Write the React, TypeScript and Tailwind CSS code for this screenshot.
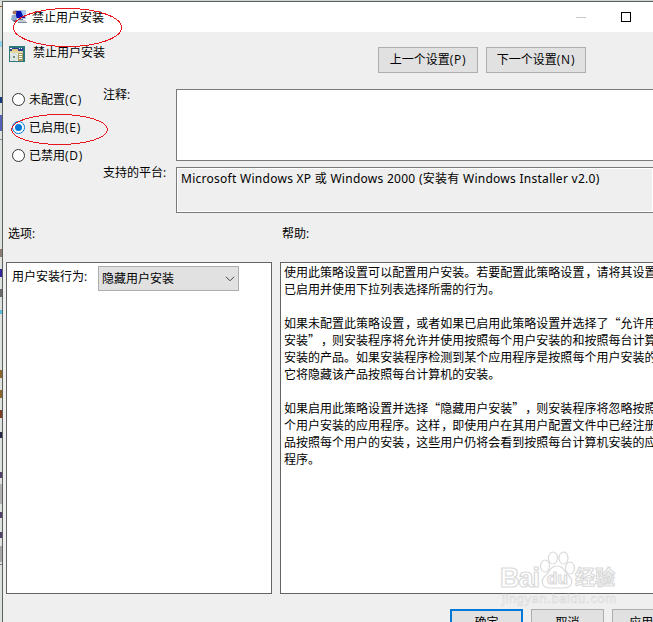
import React, { useState } from 'react';

const states = [
  { id: 'none', label: '未配置', hotkey: '(C)' },
  { id: 'on', label: '已启用', hotkey: '(E)' },
  { id: 'off', label: '已禁用', hotkey: '(D)' },
];

// Each entry is one visual line, empty strings are paragraph gaps
const helpLines = [
  '使用此策略设置可以配置用户安装。若要配置此策略设置，请将其设置为',
  '已启用并使用下拉列表选择所需的行为。',
  '',
  '如果未配置此策略设置，或者如果已启用此策略设置并选择了“允许用户',
  '安装”，则安装程序将允许并使用按照每个用户安装的和按照每台计算机',
  '安装的产品。如果安装程序检测到某个应用程序是按照每个用户安装的，',
  '它将隐藏该产品按照每台计算机的安装。',
  '',
  '如果启用此策略设置并选择“隐藏用户安装”，则安装程序将忽略按照每',
  '个用户安装的应用程序。这样，即使用户在其用户配置文件中已经注册产',
  '品按照每个用户的安装，这些用户仍将会看到按照每台计算机安装的应用',
  '程序。',
];

function PolicyIcon() {
  return (
    <svg width="16" height="16" viewBox="0 0 16 16" className="shrink-0">
      <path d="M4 1h11v9H4z" fill="#bac5da" />
      <path d="M5 2h9v7H5z" fill="#0712b5" />
      <path d="M10 2h4v6l-2-1z" fill="#9ac8fa" />
      <path d="M7 10h5v1H7z" fill="#69758e" />
      <path d="M6 11h8l2 3H7z" fill="#c3c9d2" />
      <path d="M7 13h9v1H7z" fill="#7d899d" />
      <circle cx="3.5" cy="3.5" r="2" fill="#a77b5f" />
      <path d="M1 6h4l1 5H0z" fill="#8fabcb" />
      <path d="M1 11h5v2H3z" fill="#5c6f8b" />
    </svg>
  );
}

function SettingIcon() {
  return (
    <svg width="16" height="16" viewBox="0 0 16 16" className="shrink-0">
      <path d="M0 0h16v16H0z" fill="#2b777c" />
      <path d="M1 2h13v3H1z" fill="#263f91" />
      <path d="M1 2h2v1H1zM10 2h1v1h-1zM12 2h1v1h-1z" fill="#fff" />
      <path d="M3 3h6v2H3z" fill="#e3c878" />
      <path d="M1 5h13v2H1z" fill="#e3d7a8" />
      <path d="M1 7h13v8H1z" fill="#f5f3e8" />
      <path d="M9 7h5v8H9z" fill="#a69b62" />
      <path d="M10 8h3v1h-3zM10 10h3v1h-3zM10 12h3v1h-3z" fill="#fff" />
      <circle cx="5" cy="11" r="3.5" fill="#e2e9e9" stroke="#b3c4c4" strokeWidth=".6" />
      <circle cx="5" cy="11" r="1" fill="#4f6d55" />
    </svg>
  );
}

function Watermark() {
  return (
    <svg
      width="130"
      height="66"
      viewBox="0 0 130 66"
      className="pointer-events-none absolute top-[546px] left-[495px]"
      fill="#fff"
      fillOpacity="0.65"
      stroke="#dadada"
      strokeWidth="1.2"
    >
      <text x="5" y="41" fontFamily="Liberation Sans" fontWeight="700" fontSize="27" textLength="40">
        Bai
      </text>
      <ellipse cx="50" cy="20" rx="4.5" ry="6" />
      <ellipse cx="58" cy="12" rx="4.5" ry="6" />
      <ellipse cx="68.5" cy="12" rx="4.5" ry="6" />
      <ellipse cx="75" cy="22" rx="4.5" ry="6" />
      <path d="M62 20c-7 0-7 6-12 10-5 5-3 12 5 12h14c8 0 10-7 5-12-5-4-5-10-12-10Z" />
      <text x="52" y="38" fontFamily="Liberation Sans" fontWeight="700" fontSize="17">
        du
      </text>
      <text x="80" y="39" fontFamily="Noto Sans CJK SC" fontWeight="700" fontSize="20">
        经验
      </text>
      <text x="7" y="57" fontFamily="Liberation Sans" fontSize="13" strokeWidth="0.6" textLength="114">
        jingyan.baidu.com
      </text>
    </svg>
  );
}

function HelpLine({ text }: { text: string }) {
  return (
    <p className="h-[17px]">
      {text.split('').map((ch, i) => (ch === '，' ? <span key={i} className="relative left-px">{ch}</span> : ch))}
    </p>
  );
}

function Hotkey({ text }: { text: string }) {
  return <span className="tracking-[0.8px]">{text}</span>;
}

export default function App() {
  const [selected, setSelected] = useState('on');

  return (
    <div className="relative flex h-[622px] w-[653px] overflow-hidden bg-[#cfd5d0] pt-px font-['Open_Sans','Noto_Sans_CJK_SC',sans-serif] text-[12px] leading-[17px] whitespace-nowrap text-black">
      {/* Sliver of the window behind */}
      <div className="flex w-0.5 shrink-0 flex-col bg-[#dfe1df]">
        <div className="mt-[5px] h-px bg-[#a35a20]" />
        <div className="mt-[34px] h-1.5 bg-[#8ed3ee]" />
        <div className="mt-[50px] h-1.5 bg-[#173b7c]" />
        <div className="mt-3 h-4 bg-[#5360b5]" />
        <div className="mt-2 h-px bg-[#8a8a8a]" />
        <div className="mt-[109px] h-2 bg-[#8f7c70]" />
        <div className="mt-3 h-2 bg-[#30269c]" />
        <div className="mt-3 h-2 bg-[#6a6a6a]" />
        <div className="mt-[13px] h-1 bg-[#57b9dc]" />
        <div className="mt-[56px] h-2 bg-[#8c642b]" />
        <div className="mt-3 h-2 bg-[#8c642b]" />
        <div className="mt-3 h-2 bg-[#7c3a20]" />
        <div className="mt-3.5 h-1.5 bg-[#272745]" />
        <div className="mt-[34px] h-1.5 bg-[#51406b]" />
        <div className="mt-1.5 h-5 bg-[#b0b0b0]" />
        <div className="mt-2 h-1.5 bg-[#51406b]" />
        <div className="mt-3.5 h-1.5 bg-[#51406b]" />
        <div className="mt-2 h-4 bg-[#a8a8a8]" />
        <div className="mt-0.5 h-px bg-[#777]" />
      </div>

      <div className="flex min-w-0 flex-1 flex-col border-t border-l border-[#5b625b] bg-[#efefef]">
        <div className="flex h-[30px] shrink-0 items-center bg-white pl-2">
          <PolicyIcon />
          <h1 className="ml-[5px]">禁止用户安装</h1>
          <div className="ml-auto h-px w-2.5 bg-[#c8c8c8]" />
          <div className="mr-[22px] ml-[35px] size-2.5 border border-black" />
        </div>

        <div className="flex h-[57px] shrink-0 items-start pt-[14px] pl-1.5">
          <SettingIcon />
          <h2 className="-mt-[2px] ml-2">禁止用户安装</h2>
          <div className="mt-px mr-[67px] ml-auto flex gap-2">
            <button className="h-[26px] w-[100px] border border-[#adadad] bg-[#e1e1e1] pb-0.5">
              上一个设置
              <Hotkey text="(P)" />
            </button>
            <button className="h-[26px] w-[100px] border border-[#adadad] bg-[#e1e1e1] pb-0.5">
              下一个设置
              <Hotkey text="(N)" />
            </button>
          </div>
        </div>

        <div className="flex h-[124px] shrink-0">
          <div className="flex w-[100px] flex-col gap-[11px] pt-0.5 pl-[9px]">
            {states.map((s) => (
              <label key={s.id} className="flex items-center">
                <input
                  type="radio"
                  name="state"
                  className="sr-only"
                  checked={selected === s.id}
                  onChange={() => setSelected(s.id)}
                />
                <span
                  className={
                    selected === s.id
                      ? 'mr-1 flex size-[13px] items-center justify-center rounded-full border border-[#0078d7] bg-white'
                      : 'mr-1 flex size-[13px] items-center justify-center rounded-full border border-[#333] bg-white'
                  }
                >
                  {selected === s.id && <span className="size-[7px] rounded-full bg-[#0078d7]" />}
                </span>
                {s.label}
                <Hotkey text={s.hotkey} />
              </label>
            ))}
          </div>
          <div className="flex w-[73px] flex-col justify-between pb-8">
            <span className="-mt-[3px]">注释:</span>
            <span>支持的平台:</span>
          </div>
          <div className="flex flex-1 flex-col gap-1.5">
            <div className="h-[72px] border border-r-0 border-[#7a7a7a] bg-white" />
            <div className="h-[46px] border border-r-0 border-[#7a7a7a] p-px">
              <div className="h-full bg-[#efefef] pt-px pl-[3px] font-['Noto_Sans','Noto_Sans_CJK_SC',sans-serif] tracking-[0.27px] outline outline-white">
                Microsoft Windows XP 或 Windows 2000 (安装有 Windows Installer v2.0)
              </div>
            </div>
          </div>
        </div>

        <div className="flex h-[49px] shrink-0 pt-3 pl-[5px]">
          <span className="w-[274px]">选项:</span>
          <span>帮助:</span>
        </div>

        <div className="flex h-[332px] shrink-0 gap-2 pl-[3px]">
          <div className="flex w-[266px] shrink-0 items-start border border-[#646464] bg-white pt-[3px] pl-[5px]">
            <span className="mt-0.5 w-[86px]">用户安装行为:</span>
            <button className="flex h-[25px] w-[141px] items-center justify-between border border-[#adadad] bg-[#e1e1e1] pr-[3px] pl-[3px]">
              隐藏用户安装
              <svg width="10" height="6" viewBox="0 0 10 6" fill="none" stroke="#444">
                <path d="M1 .8 5 4.8 9 .8" />
              </svg>
            </button>
          </div>
          <div className="min-w-0 flex-1 overflow-hidden border border-r-0 border-[#646464] bg-white pl-[3px] font-['Noto_Sans_CJK_SC',sans-serif] [text-spacing-trim:space-all]">
            {helpLines.map((line, i) => (
              <HelpLine key={i} text={line} />
            ))}
          </div>
        </div>

        <div className="flex shrink-0 gap-2 pt-[15px] pl-[447px]">
          <button className="h-[26px] w-[73px] shrink-0 border-2 border-[#0078d7] bg-[#e1e1e1]">确定</button>
          <button className="h-[26px] w-[73px] shrink-0 border border-[#adadad] bg-[#e1e1e1]">取消</button>
          <button className="h-[26px] w-[73px] shrink-0 border border-[#adadad] bg-[#e1e1e1]">应用(A)</button>
        </div>
      </div>

      {/* Hand-drawn highlights */}
      <svg
        width="130"
        height="150"
        className="pointer-events-none absolute top-0 left-0"
        fill="none"
        stroke="#e8141e"
        shapeRendering="crispEdges"
      >
        <ellipse cx="67.5" cy="27.5" rx="54" ry="19" />
        <ellipse cx="59.5" cy="129.5" rx="48" ry="15" />
      </svg>
      <Watermark />
    </div>
  );
}
